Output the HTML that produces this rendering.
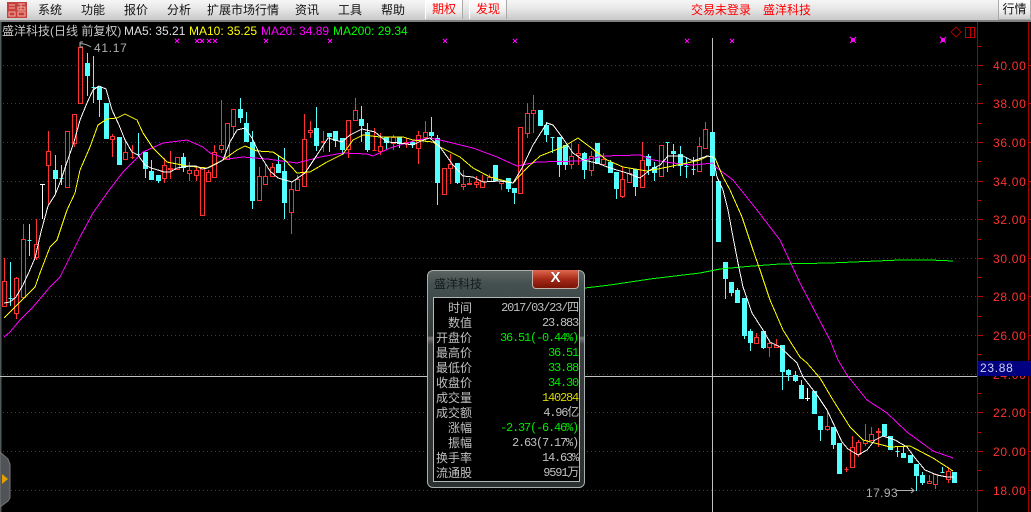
<!DOCTYPE html>
<html><head><meta charset="utf-8"><style>
html,body{margin:0;padding:0;background:#000}
#r{position:relative;width:1031px;height:512px;overflow:hidden;background:#000;font-family:"Liberation Sans","WenQuanYi Zen Hei","Noto Sans CJK SC",sans-serif;font-size:12px}
#bar{position:absolute;left:0;top:0;width:1031px;height:20px;background:linear-gradient(#f6f6f6,#e8e8e8 40%,#c8c8c8);border-bottom:2px solid #808080}
.m{position:absolute;top:3px;font-size:12px;line-height:14px;color:#111;white-space:nowrap}
.b{position:absolute;top:0;height:19px;box-sizing:border-box;border-left:1px solid #fff;border-right:1px solid #aaa;background:linear-gradient(#fff,#eee 60%,#ccc);text-align:center;line-height:18px;color:#f00}
.t{position:absolute;white-space:nowrap;line-height:14px}
.p{position:absolute;left:993px;color:#ff3232;font-size:12px;letter-spacing:.7px;line-height:14px}
#dlg{position:absolute;left:427px;top:270px;width:158px;height:218px;box-sizing:border-box;border:1px solid #a8b0b0;border-radius:6px;background:linear-gradient(#5c6462,#445050 6%,#343a3a 30%,#777 31%,#3a3e3e 34%,#2c3030)}
#in{position:absolute;left:433px;top:297px;width:147px;height:185px;box-sizing:border-box;background:#000;border:1px solid #b0b8b8}
#x{position:absolute;left:532px;top:270px;width:47px;height:19px;box-sizing:border-box;border:1px solid #c8b0a8;border-top:none;border-radius:0 0 4px 4px;background:linear-gradient(#e06a50,#a82a18 50%,#781408);color:#fff;text-align:center;font:bold 15px/15px "Liberation Sans",sans-serif;text-shadow:0 0 1px #333}
.l{position:absolute;left:434px;width:38px;text-align:right;color:#c0c0c0;font-size:12px;line-height:15px;white-space:nowrap}
.v{position:absolute;right:453px;color:#c0c0c0;font:12px/15px "Liberation Mono","WenQuanYi Zen Hei",monospace;letter-spacing:-1.2px;white-space:nowrap;text-align:right}
.g{color:#00e800}.y{color:#d8d800}
</style></head><body><div id="r">
<div id="bar"></div>
<svg style="position:absolute;left:7px;top:2px" width="20" height="16"><rect width="20" height="16" fill="#c8403c"/><path d="M2 3h6M2 6h6M2 10h6v4H2zM11 2h7M14 2v6M11 5h7v3h-7zM11 10h7v4h-7z" stroke="#eeb0a8" fill="none"/></svg>
<div class="m" style="left:38px">系统</div><div class="m" style="left:81px">功能</div><div class="m" style="left:124px">报价</div><div class="m" style="left:167px">分析</div><div class="m" style="left:207px">扩展市场行情</div><div class="m" style="left:295px">资讯</div><div class="m" style="left:338px">工具</div><div class="m" style="left:381px">帮助</div>
<div class="b" style="left:425px;width:38px">期权</div><div class="b" style="left:469px;width:38px">发现</div>
<div class="m" style="left:691px;color:#f00">交易未登录</div><div class="m" style="left:763px;color:#f00">盛洋科技</div>
<div class="b" style="left:998px;width:33px;color:#111;border:1px solid #aaa;border-top:none;height:20px">行情</div>

<svg style="position:absolute;left:0;top:0" width="1031" height="512">
<rect x="0" y="22" width="1.5" height="490" fill="#50585c"/>
<g shape-rendering="crispEdges">
<path stroke="#cc0000" stroke-dasharray="1 3" fill="none" d="M3 65.5H976M3 103.5H976M3 142.5H976M3 181.5H976M3 219.5H976M3 258.5H976M3 296.5H976M3 335.5H976M3 374.5H976M3 412.5H976M3 451.5H976M3 490.5H976"/>
<path d="M977.5 22V512M1028.5 22V512" stroke="#a00000" fill="none"/>
<path d="M978 46.5h3M978 65.5h5M978 84.5h3M978 103.5h5M978 123.5h3M978 142.5h5M978 161.5h3M978 181.5h5M978 200.5h3M978 219.5h5M978 239.5h3M978 258.5h5M978 277.5h3M978 296.5h5M978 316.5h3M978 335.5h5M978 354.5h3M978 393.5h3M978 412.5h5M978 432.5h3M978 451.5h5M978 470.5h3M978 490.5h5M1028 65.5h3M1028 103.5h3M1028 142.5h3M1028 181.5h3M1028 219.5h3M1028 258.5h3M1028 296.5h3M1028 335.5h3M1028 412.5h3M1028 451.5h3M1028 490.5h3" stroke="#c00000" fill="none"/>
<path d="M712.5 38V512M0 376.5H977" stroke="#c0c0c0" fill="none"/>
<!-- red wicks -->
<path stroke="#ff3232" fill="none" d="M4.5 258V306M16.5 277V319M23.5 224V297M36.5 219V260M48.5 131V205M74.5 114V147M112.5 134V157M125.5 139V159M132.5 145V159M164.5 158V183M170.5 151V179M189.5 162V181M196.5 167V181M208.5 170V181M214.5 145V177M221.5 100V153M233.5 109V137M259.5 167V200M265.5 164V184M272.5 163V176M291.5 182V234M297.5 175V190M304.5 114V186M310.5 121V138M323.5 131V152M348.5 120V158M355.5 98V120M374.5 128V150M380.5 133V155M393.5 135V150M406.5 138V148M418.5 131V164M425.5 121V142M450.5 154V184M463.5 170V190M469.5 178V185M476.5 176V188M482.5 175V187M489.5 174V181M501.5 181V190M527.5 103V138M533.5 95V133M571.5 143V169M578.5 144V165M591.5 151V176M603.5 153V164M622.5 167V198M629.5 168V182M642.5 142V187M699.5 137V171M705.5 122V148M756.5 333V343M769.5 341V357M776.5 339V347M827.5 410V431M846.5 467V472M852.5 436V467M858.5 440V457M865.5 424V446M871.5 427V440M878.5 428V447M929.5 475V483M935.5 474V489M948.5 467V483"/>
<!-- red bodies -->
<path stroke="#ff3232" fill="#000" d="M2.5 281.5h4V306.5h-4zM14.5 278.5h4V313.5h-4zM21.5 239.5h4V297.5h-4zM34.5 244.5h4V257.5h-4zM46.5 151.5h4V165.5h-4zM65.5 131.5h4V187.5h-4zM72.5 114.5h4V143.5h-4zM78.5 47.5h4V103.5h-4zM110.5 136.5h4V139.5h-4zM123.5 152.5h4V159.5h-4zM130.5 157.5h4zM162.5 165.5h4V178.5h-4zM168.5 168.5h4V169.5h-4zM175.5 157.5h4V169.5h-4zM187.5 170.5h4V173.5h-4zM194.5 170.5h4V175.5h-4zM200.5 167.5h4V215.5h-4zM206.5 172.5h4V181.5h-4zM212.5 152.5h4V177.5h-4zM219.5 145.5h4V149.5h-4zM225.5 123.5h4V159.5h-4zM231.5 109.5h4V126.5h-4zM257.5 176.5h4V200.5h-4zM263.5 176.5h4V184.5h-4zM270.5 167.5h4V176.5h-4zM289.5 189.5h4V212.5h-4zM295.5 179.5h4V190.5h-4zM302.5 139.5h4V186.5h-4zM308.5 130.5h4V132.5h-4zM321.5 141.5h4V142.5h-4zM346.5 120.5h4V149.5h-4zM353.5 110.5h4V120.5h-4zM372.5 150.5h4zM378.5 146.5h4V151.5h-4zM391.5 137.5h4V143.5h-4zM404.5 142.5h4V143.5h-4zM416.5 135.5h4V148.5h-4zM423.5 132.5h4V137.5h-4zM442.5 168.5h4V194.5h-4zM448.5 164.5h4V168.5h-4zM461.5 184.5h4V186.5h-4zM467.5 183.5h4V184.5h-4zM474.5 182.5h4V184.5h-4zM480.5 181.5h4V187.5h-4zM487.5 177.5h4V181.5h-4zM499.5 181.5h4V183.5h-4zM518.5 127.5h4V193.5h-4zM525.5 113.5h4V133.5h-4zM531.5 110.5h4V113.5h-4zM569.5 156.5h4V164.5h-4zM576.5 153.5h4V155.5h-4zM589.5 156.5h4V170.5h-4zM601.5 159.5h4V164.5h-4zM620.5 179.5h4V196.5h-4zM627.5 173.5h4V182.5h-4zM640.5 160.5h4V187.5h-4zM659.5 145.5h4V176.5h-4zM697.5 146.5h4V171.5h-4zM703.5 129.5h4V148.5h-4zM754.5 337.5h4V343.5h-4zM767.5 343.5h4V347.5h-4zM774.5 345.5h4V347.5h-4zM825.5 426.5h4V429.5h-4zM844.5 469.5h4zM850.5 447.5h4V467.5h-4zM856.5 442.5h4V454.5h-4zM863.5 440.5h4V443.5h-4zM869.5 434.5h4V440.5h-4zM876.5 431.5h4V432.5h-4zM927.5 481.5h4V483.5h-4zM933.5 474.5h4V484.5h-4zM946.5 471.5h4V479.5h-4z"/>
<!-- cyan wicks -->
<path stroke="#54ffff" fill="none" d="M10.5 262V306M29.5 224V256M55.5 155V193M61.5 165V185M87.5 53V96M93.5 56V103M99.5 87V117M119.5 137V164M138.5 133V155M145.5 152V178M151.5 160V180M158.5 175V183M183.5 153V172M240.5 98V123M246.5 112V141M252.5 131V209M278.5 156V173M284.5 148V219M316.5 107V151M329.5 133V152M335.5 131V147M342.5 138V155M361.5 106V142M367.5 123V152M386.5 137V150M399.5 137V148M412.5 142V148M431.5 117V138M437.5 135V205M457.5 163V184M508.5 178V192M514.5 188V204M546.5 122V142M552.5 137V153M559.5 137V177M565.5 145V170M584.5 152V179M610.5 160V172M616.5 172V199M635.5 169V196M648.5 154V175M654.5 162V181M667.5 142V172M673.5 144V168M680.5 146V176M686.5 157V178M693.5 157V175M725.5 262V299M731.5 282V296M737.5 288V302M744.5 298V339M750.5 329V351M763.5 331V349M782.5 345V390M788.5 369V381M795.5 371V382M801.5 380V399M820.5 416V441M833.5 427V449M897.5 447V457M903.5 447V457M916.5 464V491M922.5 472V485M942.5 467V472M954.5 472V483"/>
<!-- cyan bodies -->
<path stroke="#54ffff" fill="#54ffff" d="M8.5 298.5h4zM27.5 240.5h4zM53.5 170.5h4V178.5h-4zM59.5 178.5h4zM85.5 63.5h4V75.5h-4zM91.5 87.5h4zM97.5 87.5h4V99.5h-4zM104.5 103.5h4V138.5h-4zM117.5 137.5h4V164.5h-4zM136.5 154.5h4zM143.5 152.5h4V168.5h-4zM149.5 171.5h4V179.5h-4zM156.5 175.5h4V180.5h-4zM181.5 157.5h4V167.5h-4zM238.5 109.5h4V117.5h-4zM244.5 123.5h4V141.5h-4zM250.5 142.5h4V200.5h-4zM276.5 164.5h4V172.5h-4zM282.5 171.5h4V202.5h-4zM314.5 128.5h4V145.5h-4zM327.5 133.5h4V136.5h-4zM333.5 131.5h4V140.5h-4zM340.5 138.5h4V149.5h-4zM359.5 119.5h4V125.5h-4zM365.5 132.5h4V149.5h-4zM384.5 137.5h4V142.5h-4zM397.5 137.5h4V143.5h-4zM410.5 142.5h4V144.5h-4zM429.5 132.5h4V135.5h-4zM435.5 138.5h4V182.5h-4zM455.5 163.5h4V182.5h-4zM493.5 165.5h4V180.5h-4zM506.5 178.5h4V188.5h-4zM512.5 188.5h4V192.5h-4zM538.5 110.5h4V125.5h-4zM544.5 125.5h4V134.5h-4zM550.5 137.5h4zM557.5 137.5h4V164.5h-4zM563.5 145.5h4V164.5h-4zM582.5 153.5h4V169.5h-4zM595.5 143.5h4V163.5h-4zM608.5 162.5h4V172.5h-4zM614.5 172.5h4V188.5h-4zM633.5 169.5h4V186.5h-4zM646.5 156.5h4V165.5h-4zM652.5 167.5h4V172.5h-4zM665.5 142.5h4zM671.5 151.5h4V153.5h-4zM678.5 154.5h4V165.5h-4zM684.5 166.5h4zM691.5 169.5h4zM710.5 132.5h4V175.5h-4zM716.5 181.5h4V241.5h-4zM723.5 262.5h4V278.5h-4zM729.5 282.5h4V292.5h-4zM735.5 290.5h4V302.5h-4zM742.5 298.5h4V335.5h-4zM748.5 331.5h4V342.5h-4zM761.5 331.5h4V347.5h-4zM780.5 345.5h4V371.5h-4zM786.5 370.5h4V374.5h-4zM793.5 375.5h4V380.5h-4zM799.5 385.5h4V398.5h-4zM812.5 391.5h4V413.5h-4zM818.5 416.5h4V429.5h-4zM831.5 427.5h4V444.5h-4zM837.5 443.5h4V473.5h-4zM882.5 424.5h4V435.5h-4zM888.5 436.5h4V449.5h-4zM895.5 451.5h4zM901.5 453.5h4V457.5h-4zM908.5 455.5h4V462.5h-4zM914.5 464.5h4V475.5h-4zM920.5 475.5h4V482.5h-4zM940.5 472.5h4zM952.5 472.5h4V482.5h-4z"/>
<path stroke="#fff" fill="none" d="M42.5 184V219M40 184.5h5M807.5 388V401M805 398.5h5"/>
<!-- x marks -->
<path stroke="#ff00ff" stroke-width="1.3" fill="none" d="M175 39l4 4M179 39l-4 4M195 39l4 4M199 39l-4 4M200 39l4 4M204 39l-4 4M207 39l4 4M211 39l-4 4M213 39l4 4M217 39l-4 4M264 39l4 4M268 39l-4 4M328 39l4 4M332 39l-4 4M443 39l4 4M447 39l-4 4M513 39l4 4M517 39l-4 4M685 39l4 4M689 39l-4 4M730 39l4 4M734 39l-4 4"/>
<path fill="#ff00ff" d="M851 38h4v4h-4zM941 38h4v4h-4z"/>
<path stroke="#ff00ff" fill="none" d="M850 37l6 6M856 37l-6 6M940 37l6 6M946 37l-6 6"/>
<!-- MA lines -->
<g fill="none" stroke-width="1">
<polyline stroke="#ff00ff" points="4,337 10,332 20,320 33,307 50,287 60,277 80,237 93,213 107,193 123,172 143,152 163,143 187,140 203,147 210,153 227,159 243,157 267,159 297,163 320,157 343,153 367,154 373,156 390,148 417,140 430,138 440,140 473,148 497,157 517,166 537,162 580,161 603,156 640,155 653,160 680,164 693,165 713,163 717,168 733,180 757,210 780,240 800,283 830,340 838,360 847,375 867,400 887,413 907,432 933,451 953,458"/>
<polyline stroke="#00ff00" points="585,288 610,285 650,279 700,273 720,269 753,266 780,264 830,263 900,260 930,260 953,261"/>
<polyline stroke="#ffff00" points="4,318 17,305 35,287 40,273 50,247 57,240 67,210 75,193 80,170 90,147 98,125 107,119 117,118 125,114 137,120 143,133 153,148 167,162 187,166 207,168 223,160 237,150 245,146 257,151 273,152 285,160 297,173 310,172 327,162 343,154 353,140 363,135 380,137 403,137 413,140 433,142 440,147 460,157 473,168 490,177 513,183 527,168 540,156 563,147 578,138 590,147 607,160 623,167 647,171 663,168 687,163 700,160 708,156 715,158 723,177 730,190 742,217 753,250 760,270 770,300 783,330 800,357 807,363 820,378 833,400 850,427 863,440 890,447 910,446 933,458 953,471"/>
<polyline stroke="#fff" points="4,303 10,302 16,297 23,285 29,272 35,258 41,232 48,206 55,195 61,180 67,162 74,142 80,120 87,103 93,90 99,86 106,89 112,110 119,125 125,140 132,152 138,155 145,165 151,168 158,170 164,172 170,172 177,168 183,167 190,166 196,166 202,169 208,168 214,165 223,160 230,142 237,130 245,128 252,138 260,155 270,171 278,178 292,182 305,173 317,155 328,138 342,142 350,135 362,129 375,132 387,142 400,143 413,145 423,140 430,138 440,147 453,165 463,176 473,177 483,182 500,181 513,183 522,168 533,145 547,123 553,125 562,137 573,153 583,160 597,163 610,168 627,173 640,178 650,170 660,165 668,156 683,156 693,161 707,156 713,157 717,177 723,190 728,210 733,237 738,263 743,287 752,313 763,330 770,342 780,347 797,363 803,377 817,395 827,410 835,427 842,442 848,449 858,455 867,450 875,440 883,436 895,440 907,447 915,458 925,470 937,475 947,477 954,477"/>
</g>
</g>
<g fill="none" stroke="#b0b0b0"><path d="M80 44q4-1 11 3"/><path d="M80 42h3M80 42v5h3"/><path d="M897 490.500H914M911 488l3 2.500-3 2.500"/></g>
<path d="M956 27l5 5-5 5-5-5z" fill="none" stroke="#a00000"/>
<path d="M965.500 27.500h9v10h-9zM970.500 27.500v10" fill="none" stroke="#c00000"/>
<path d="M0 452l8 7 2 5v34l-2 3-8 6z" fill="#505458" stroke="#777"/>
<path d="M2 474l6 5-6 5z" fill="#e0a000"/>
</svg>

<div class="t" style="left:2px;top:24px;color:#c8c8c8">盛洋科技(日线 前复权)</div>
<div class="t" style="left:124px;top:24px;color:#e0e0e0">MA5: 35.21</div>
<div class="t" style="left:189px;top:24px;color:#ff0">MA10: 35.25</div>
<div class="t" style="left:261px;top:24px;color:#f0f">MA20: 34.89</div>
<div class="t" style="left:333px;top:24px;color:#0f0">MA200: 29.34</div>
<div class="t" style="left:94px;top:41px;color:#b0b0b0;letter-spacing:.7px">41.17</div>
<div class="t" style="left:866px;top:486px;color:#b0b0b0;letter-spacing:.4px">17.93</div>

<div class="p" style="top:59px">40.00</div><div class="p" style="top:97px">38.00</div><div class="p" style="top:136px">36.00</div><div class="p" style="top:175px">34.00</div><div class="p" style="top:213px">32.00</div><div class="p" style="top:252px">30.00</div><div class="p" style="top:290px">28.00</div><div class="p" style="top:329px">26.00</div><div class="p" style="top:368px">24.00</div><div class="p" style="top:406px">22.00</div><div class="p" style="top:445px">20.00</div><div class="p" style="top:484px">18.00</div>
<div class="t" style="left:978px;top:361px;width:53px;height:15px;background:#000080;color:#d0d0f0;letter-spacing:.7px;padding-left:2px;box-sizing:border-box;line-height:15px">23.88</div>

<div id="dlg"></div><div id="in"></div><div id="x">X</div>
<div class="t" style="left:434px;top:277px;color:#141c1c;font-size:12px">盛洋科技</div>
<div class="l" style="top:301px">时间</div><div class="l" style="top:316px">数值</div><div class="l" style="top:331px">开盘价</div><div class="l" style="top:346px">最高价</div><div class="l" style="top:361px">最低价</div><div class="l" style="top:376px">收盘价</div><div class="l" style="top:391px">成交量</div><div class="l" style="top:406px">成交额</div><div class="l" style="top:421px">涨幅</div><div class="l" style="top:436px">振幅</div><div class="l" style="top:451px">换手率</div><div class="l" style="top:466px">流通股</div>
<div class="v" style="top:301px">2017/03/23/四</div><div class="v" style="top:316px">23.883</div><div class="v g" style="top:331px">36.51(-0.44%)</div><div class="v g" style="top:346px">36.51</div><div class="v g" style="top:361px">33.88</div><div class="v g" style="top:376px">34.30</div><div class="v y" style="top:391px">140284</div><div class="v" style="top:406px">4.96亿</div><div class="v g" style="top:421px">-2.37(-6.46%)</div><div class="v" style="top:436px">2.63(7.17%)</div><div class="v" style="top:451px">14.63%</div><div class="v" style="top:466px">9591万</div>
</div></body></html>
